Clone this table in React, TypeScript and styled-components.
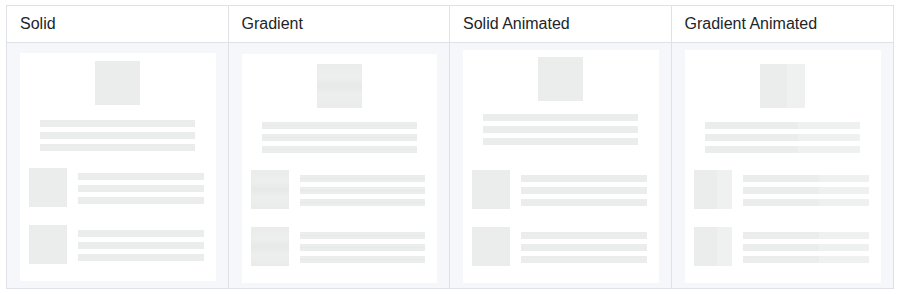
import styled, { createGlobalStyle, css } from 'styled-components';

const GlobalStyle = createGlobalStyle`
  html, body {
    margin: 0;
    background: #ffffff;
  }
  body {
    font-family: 'Liberation Sans', Arial, sans-serif;
    color: #212529;
  }
`;

type Variant = 'solid' | 'gradient' | 'solidAnimated' | 'gradientAnimated';

const Page = styled.div`
  padding: 5px 8px 0 6px;
`;

const Table = styled.div`
  display: grid;
  grid-template-columns: repeat(4, 1fr);
  border: 1px solid #dee2e6;
`;

const HeadCell = styled.div<{ $last?: boolean }>`
  padding: 8px 13px;
  font-size: 16px;
  line-height: 20px;
  border-bottom: 1px solid #dee2e6;
  border-right: ${(p) => (p.$last ? 'none' : '1px solid #dee2e6')};
`;

const BodyCell = styled.div<{ $last?: boolean; $pad: number }>`
  display: flex;
  align-items: flex-end;
  height: 245px;
  box-sizing: border-box;
  padding: 6px 12px ${(p) => p.$pad}px 13px;
  background: #f6f7fb;
  border-right: ${(p) => (p.$last ? 'none' : '1px solid #dee2e6')};
`;

const Card = styled.div<{ $top: number; $height: number }>`
  flex: 1;
  height: ${(p) => p.$height}px;
  display: flex;
  flex-direction: column;
  padding: ${(p) => p.$top}px 12px 17px 9px;
  box-sizing: border-box;
  background: #ffffff;
`;

const fill = (v: Variant) => {
  switch (v) {
    case 'gradient':
      return css`
        background: linear-gradient(to bottom, #eaecec 0%, #edefef 30%, #e7e9e9 50%, #edefef 70%, #eaecec 100%);
      `;
    case 'gradientAnimated':
      return css`
        background: linear-gradient(to right, #ebeded 0%, #ebeded 60%, #eff1f1 60%, #eff1f1 100%);
      `;
    default:
      return css`
        background: #ebeded;
      `;
  }
};

const Hero = styled.div<{ $gap: number }>`
  display: flex;
  flex-direction: column;
  align-items: center;
  gap: ${(p) => p.$gap}px;
  padding-left: 3px;
`;

const HeroBox = styled.div<{ $v: Variant }>`
  width: 45px;
  height: 44px;
  ${(p) => fill(p.$v)}
`;

const Lines = styled.div<{ $width?: number }>`
  display: flex;
  flex-direction: column;
  gap: 5px;
  width: ${(p) => (p.$width ? `${p.$width}px` : 'auto')};
`;

const Line = styled.div<{ $v: Variant }>`
  height: 7px;
  ${(p) => fill(p.$v)}
`;

const Rows = styled.div`
  margin-top: auto;
  display: flex;
  flex-direction: column;
  gap: 18px;
`;

const Row = styled.div`
  display: flex;
  gap: 11px;
`;

const Thumb = styled.div<{ $v: Variant }>`
  width: 38px;
  height: 39px;
  flex-shrink: 0;
  ${(p) => fill(p.$v)}
`;

const RowLines = styled(Lines)`
  flex: 1;
  padding-top: 5px;
`;

const columns: { title: string; v: Variant; top: number; gap: number; height: number; pad: number }[] = [
  { title: 'Solid', v: 'solid', top: 8, gap: 15, height: 228, pad: 7 },
  { title: 'Gradient', v: 'gradient', top: 10, gap: 14, height: 229, pad: 5 },
  { title: 'Solid Animated', v: 'solidAnimated', top: 7, gap: 13, height: 233, pad: 5 },
  { title: 'Gradient Animated', v: 'gradientAnimated', top: 14, gap: 14, height: 233, pad: 5 },
];

const Skeleton = ({ v, top, gap, height }: { v: Variant; top: number; gap: number; height: number }) => (
  <Card $top={top} $height={height}>
    <Hero $gap={gap}>
      <HeroBox $v={v} />
      <Lines $width={155}>
        <Line $v={v} />
        <Line $v={v} />
        <Line $v={v} />
      </Lines>
    </Hero>
    <Rows>
      {[0, 1].map((i) => (
        <Row key={i}>
          <Thumb $v={v} />
          <RowLines>
            <Line $v={v} />
            <Line $v={v} />
            <Line $v={v} />
          </RowLines>
        </Row>
      ))}
    </Rows>
  </Card>
);

export default function App() {
  return (
    <Page>
      <GlobalStyle />
      <Table>
        {columns.map((c, i) => (
          <HeadCell key={c.title} $last={i === columns.length - 1}>
            {c.title}
          </HeadCell>
        ))}
        {columns.map((c, i) => (
          <BodyCell key={c.title} $last={i === columns.length - 1} $pad={c.pad}>
            <Skeleton v={c.v} top={c.top} gap={c.gap} height={c.height} />
          </BodyCell>
        ))}
      </Table>
    </Page>
  );
}
